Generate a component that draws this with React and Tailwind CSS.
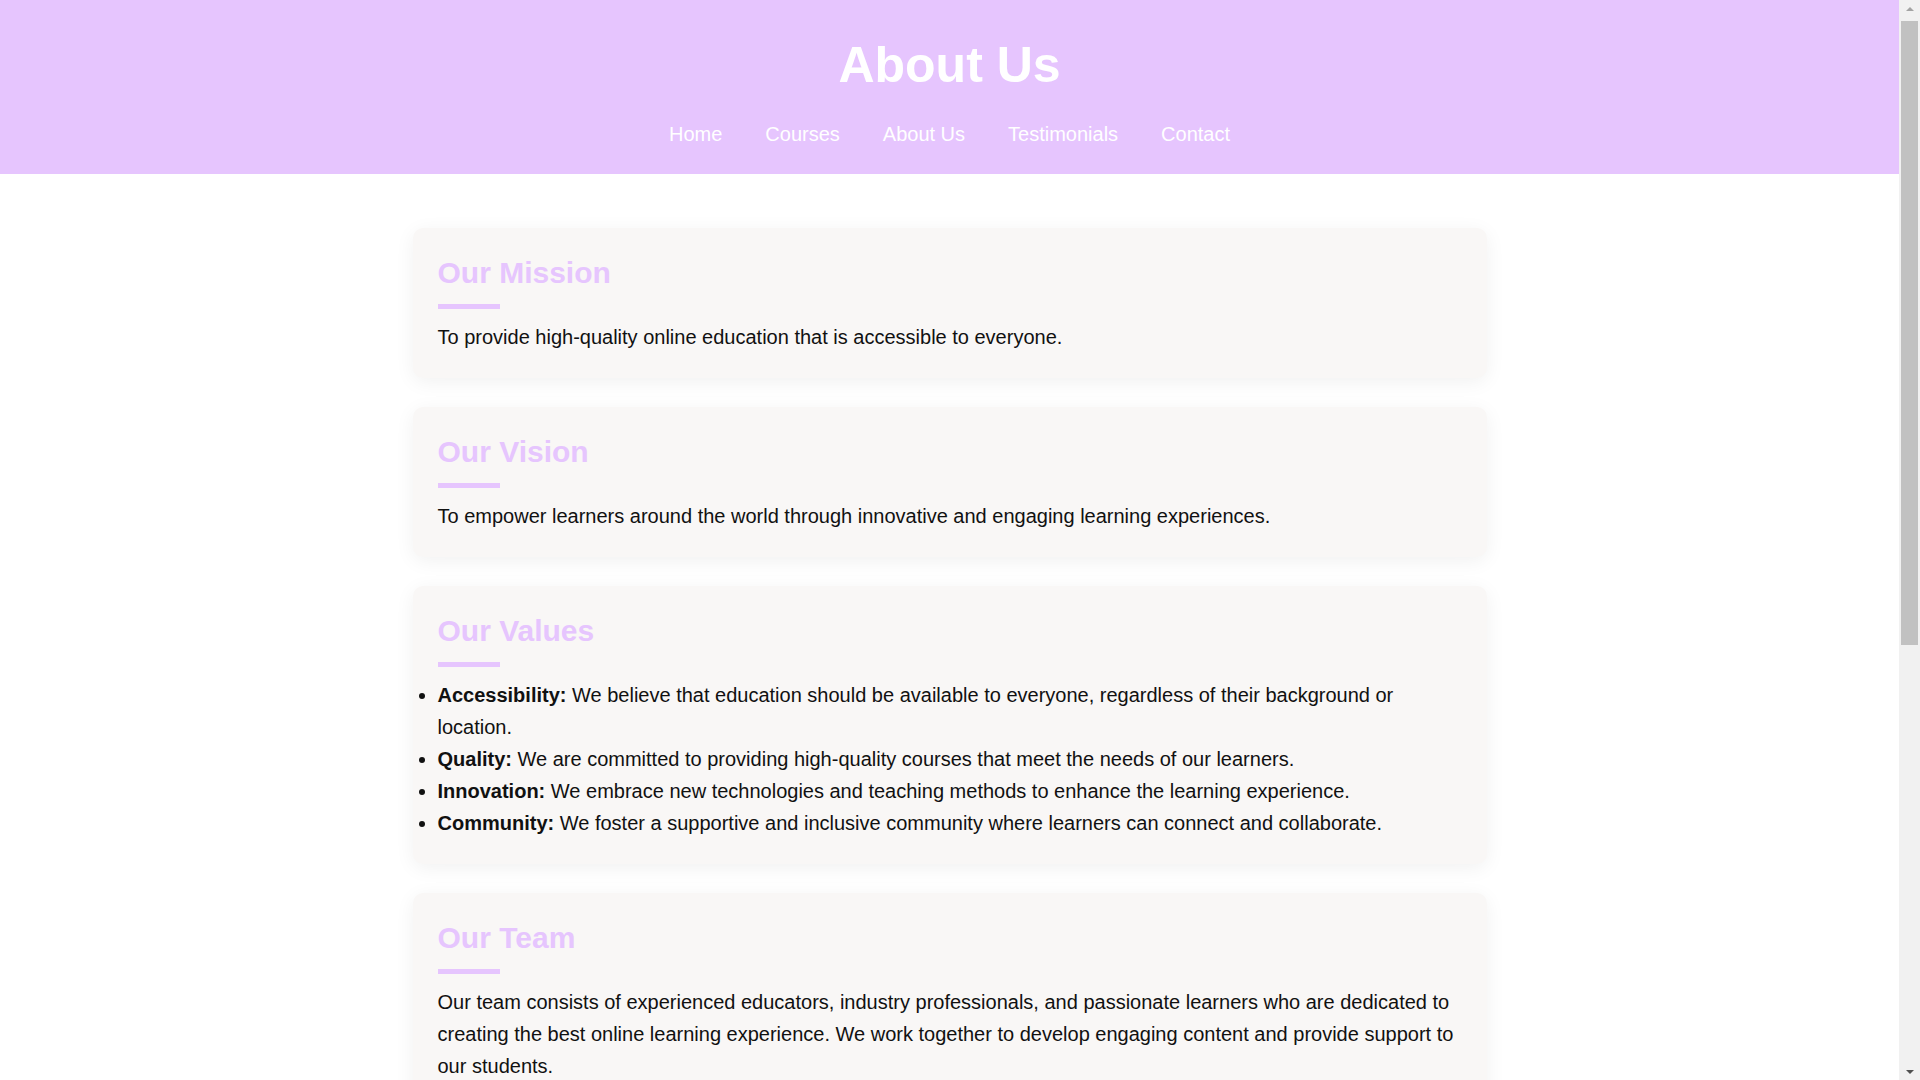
import React from 'react';

const navLinks = ['Home', 'Courses', 'About Us', 'Testimonials', 'Contact'];

const values = [
  { label: 'Accessibility:', text: 'We believe that education should be available to everyone, regardless of their background or location.' },
  { label: 'Quality:', text: 'We are committed to providing high-quality courses that meet the needs of our learners.' },
  { label: 'Innovation:', text: 'We embrace new technologies and teaching methods to enhance the learning experience.' },
  { label: 'Community:', text: 'We foster a supportive and inclusive community where learners can connect and collaborate.' },
];

const Section = ({ title, children }) => (
  <section className="bg-[#f9f7f6] rounded-[10px] shadow-[0_4px_20px_rgba(0,0,0,0.06)] px-[25px] pt-[27px] pb-[25px]">
    <h2 className="text-[30px] leading-[36px] font-bold text-[#e6c5fe]">{title}</h2>
    <div className="w-[62px] h-[5px] bg-[#e6c5fe] mt-[13px] mb-[12px]" />
    {children}
  </section>
);

// fake browser scrollbar, the reference shows one on the right edge
const Scrollbar = () => (
  <div className="fixed top-0 right-0 h-screen w-[21px] bg-[#f1f1f1] flex flex-col items-center">
    <div className="h-[17px] flex items-center justify-center">
      <div className="w-0 h-0 border-l-[4px] border-r-[4px] border-b-[4px] border-l-transparent border-r-transparent border-b-[#a3a3a3]" />
    </div>
    <div className="w-[17px] h-[624px] bg-[#c1c1c1] mt-[4px]" />
    <div className="flex-1" />
    <div className="h-[17px] flex items-center justify-center">
      <div className="w-0 h-0 border-l-[4px] border-r-[4px] border-t-[4px] border-l-transparent border-r-transparent border-t-[#505050]" />
    </div>
  </div>
);

const App = () => {
  return (
    <div className="min-h-screen bg-white font-['Liberation_Sans',Arial,sans-serif] text-[#111]">
      <div className="mr-[21px]">
        <header className="bg-[#e6c5fe] pt-[35px] pb-[25px] text-center text-white">
          <h1 className="text-[50px] leading-[60px] font-bold">About Us</h1>
          <nav className="mt-[24px] flex justify-center gap-[43px] text-[20px] leading-[30px]">
            {navLinks.map((link) => (
              <a key={link} href="#" className="text-white">{link}</a>
            ))}
          </nav>
        </header>

        <main className="w-[1074px] mx-auto pt-[54px] pb-[40px] flex flex-col gap-[29px] text-[20px] leading-[32px]">
          <Section title="Our Mission">
            <p>To provide high-quality online education that is accessible to everyone.</p>
          </Section>

          <Section title="Our Vision">
            <p>To empower learners around the world through innovative and engaging learning experiences.</p>
          </Section>

          <Section title="Our Values">
            <ul className="list-disc">
              {values.map((v) => (
                <li key={v.label}>
                  <strong className="font-bold">{v.label}</strong> {v.text}
                </li>
              ))}
            </ul>
          </Section>

          <Section title="Our Team">
            <p>
              Our team consists of experienced educators, industry professionals, and passionate learners who are dedicated to
              creating the best online learning experience. We work together to develop engaging content and provide support to
              our students.
            </p>
          </Section>
        </main>
      </div>
      <Scrollbar />
    </div>
  );
};

export default App;
